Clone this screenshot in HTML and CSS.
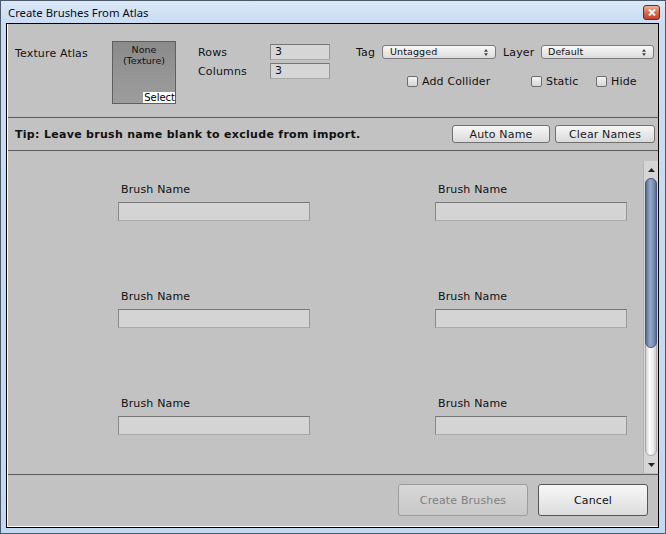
FILE: index.html
```html
<!DOCTYPE html>
<html>
<head>
<meta charset="utf-8">
<title>Create Brushes From Atlas</title>
<link rel="stylesheet" href="styles.css">
</head>
<body>
<div class="window">
  <div class="titlebar">
    <span class="title">Create Brushes From Atlas</span>
    <span class="close"><svg width="8" height="7" viewBox="0 0 8 7"><path d="M1 0.5 L7 6.5 M7 0.5 L1 6.5" stroke="#fff" stroke-width="2"/></svg></span>
  </div>
  <div class="client">
    <div class="top">
      <div class="atlas-label">Texture Atlas</div>
      <div class="texture">
        <div class="tex-text">None<br>(Texture)</div>
        <div class="tex-select">Select</div>
      </div>
      <div class="rc">
        <span class="lbl">Rows</span><span class="num">3</span>
        <span class="lbl">Columns</span><span class="num">3</span>
      </div>
      <div class="props">
        <div class="prop-row">
          <span class="tag-lbl">Tag</span>
          <span class="popup tag-pop">Untagged<svg width="4" height="7" viewBox="0 0 4 7"><path d="M0 2.8 L2 0 L4 2.8Z M0 4.2 L2 7 L4 4.2Z" fill="#444"/></svg></span>
          <span class="layer-lbl">Layer</span>
          <span class="popup layer-pop">Default<svg width="4" height="7" viewBox="0 0 4 7"><path d="M0 2.8 L2 0 L4 2.8Z M0 4.2 L2 7 L4 4.2Z" fill="#444"/></svg></span>
        </div>
        <div class="check-row">
          <span class="check w1"><span class="box"></span>Add Collider</span>
          <span class="check w2"><span class="box"></span>Static</span>
          <span class="check"><span class="box"></span>Hide</span>
        </div>
      </div>
    </div>
    <div class="tip">
      <span class="tip-text">Tip: Leave brush name blank to exclude from import.</span>
      <span class="btn auto">Auto Name</span>
      <span class="btn clear">Clear Names</span>
    </div>
    <div class="scroll">
      <div class="fields">
        <div class="field"><span class="field-lbl">Brush Name</span><span class="field-input"></span></div>
        <div class="field"><span class="field-lbl">Brush Name</span><span class="field-input"></span></div>
        <div class="field"><span class="field-lbl">Brush Name</span><span class="field-input"></span></div>
        <div class="field"><span class="field-lbl">Brush Name</span><span class="field-input"></span></div>
        <div class="field"><span class="field-lbl">Brush Name</span><span class="field-input"></span></div>
        <div class="field"><span class="field-lbl">Brush Name</span><span class="field-input"></span></div>
      </div>
      <div class="scrollbar">
        <span class="arrow"><svg width="7" height="4" viewBox="0 0 7 4"><path d="M0 4 L3.5 0 L7 4Z" fill="#222"/></svg></span>
        <span class="groove"><span class="thumb"></span></span>
        <span class="arrow"><svg width="7" height="4" viewBox="0 0 7 4"><path d="M0 0 L3.5 4 L7 0Z" fill="#222"/></svg></span>
      </div>
    </div>
    <div class="footer">
      <span class="big disabled">Create Brushes</span>
      <span class="big cancel">Cancel</span>
    </div>
  </div>
</div>
</body>
</html>
```
FILE: styles.css
```css
* { box-sizing: border-box; }
html, body { margin: 0; padding: 0; }
body {
  width: 666px; height: 534px; overflow: hidden;
  font-family: "DejaVu Sans", sans-serif; font-size: 11px; color: #111;
  letter-spacing: 0.15px;
  background: #c5daf2;
}
.window {
  width: 666px; height: 534px;
  border: 1px solid #4b5a6b;
  background: linear-gradient(#dbe8f7, #c9dcf3 22px, #c3d9f1);
  padding: 0 6px 5px 5px;
  display: flex; flex-direction: column;
}
.titlebar {
  height: 22px; flex: none;
  display: flex; align-items: center; justify-content: space-between;
  padding-left: 2px;
}
.title { font-family: "Noto Sans", sans-serif; font-size: 11.3px; letter-spacing: 0; color: #0a0a18; }
.close {
  width: 17px; height: 15px; margin-top: 1px; margin-right: -1px;
  border: 1px solid #6b2b1e; border-radius: 3px;
  background: linear-gradient(#efb3a0, #da6c50 50%, #c5402a);
  display: flex; align-items: center; justify-content: center;
}
.client {
  flex: 1;
  border: 1px solid #000;
  background: #c2c2c2;
  box-shadow: inset 1px -1px 0 #fff;
  padding: 0 0 1px 1px;
  display: flex; flex-direction: column;
}
.top {
  height: 94px; border-bottom: 1px solid #5d5d5d;
  display: flex; align-items: flex-start;
  padding: 17px 0 0 7px;
}
.atlas-label { width: 97px; padding-top: 6px; line-height: 13px; }
.texture {
  width: 64px; height: 63px; margin-right: 22px;
  border: 1px solid #5f5f5f;
  background: linear-gradient(#8a8a8a, #9d9d9d);
  display: flex; flex-direction: column;
}
.tex-text { font-size: 9.5px; letter-spacing: 0; line-height: 11px; text-align: center; padding-top: 2px; color: #111; }
.tex-select {
  margin-top: auto; align-self: flex-end;
  width: 32px; height: 11px; background: #fff;
  font-size: 10px; letter-spacing: 0; line-height: 11px; text-align: right; color: #000;
  white-space: nowrap;
}
.rc {
  display: grid; grid-template-columns: 72px 60px; row-gap: 3px;
  align-items: center; margin-top: 3px;
}
.lbl { line-height: 13px; }
.num {
  height: 16px; line-height: 14px; padding-left: 4px;
  border: 1px solid; border-color: #777 #999 #a8a8a8 #8a8a8a;
  background: #d6d6d6;
}
.props { margin-left: 26px; margin-top: 4px; }
.prop-row { display: flex; align-items: center; height: 14px; }
.tag-lbl { width: 26px; line-height: 13px; }
.layer-lbl { width: 38px; line-height: 13px; }
.popup {
  height: 14px;
  border: 1px solid #7a7a7a; border-radius: 3px;
  background: linear-gradient(#f8f8f8, #dcdcdc);
  font-size: 9.5px; letter-spacing: 0.1px; line-height: 12px;
  padding: 0 7px 0 7px;
  display: flex; align-items: center; justify-content: space-between;
}
.tag-pop { width: 114px; margin-right: 7px; }
.layer-pop { width: 113px; padding-left: 6px; }
.check-row { display: flex; align-items: center; height: 13px; margin-top: 16px; padding-left: 51px; }
.check { display: flex; align-items: center; line-height: 13px; }
.w1 { width: 124px; }
.w2 { width: 65px; }
.box {
  width: 11px; height: 11px; margin-right: 4px;
  border: 1px solid #6d6d6d; border-radius: 2px;
  background: linear-gradient(#f4f4f4, #d6d6d6);
}
.tip {
  height: 33px; border-bottom: 1px solid #5d5d5d;
  display: flex; align-items: center;
  padding: 0 3px 0 7px;
}
.tip-text { font-weight: bold; letter-spacing: 0.3px; flex: 1; line-height: 13px; }
.btn {
  height: 18px; line-height: 13px;
  border: 1px solid #6f6f6f; border-radius: 3px;
  background: linear-gradient(#f7f7f7, #dadada);
  display: flex; align-items: center; justify-content: center;
  color: #1a1a1a;
}
.auto { width: 98px; margin-right: 5px; }
.clear { width: 100px; }
.scroll { height: 324px; border-bottom: 1px solid #5d5d5d; display: flex; }
.fields {
  flex: 1;
  display: grid; grid-template-columns: 192px 192px;
  column-gap: 125px; row-gap: 69px; align-content: start;
  padding: 32px 0 0 110px;
}
.field { display: flex; flex-direction: column; }
.field-lbl { line-height: 13px; padding-left: 3px; margin-bottom: 6px; }
.field-input {
  height: 19px;
  border: 1px solid; border-color: #777 #999 #ababab #888;
  background: #d4d4d4;
}
.scrollbar {
  width: 15px; margin: 10px 0 1px 0;
  background: #d5d5d5; border-left: 1px solid #b3b3b3;
  display: flex; flex-direction: column; align-items: center;
}
.arrow { height: 17px; display: flex; align-items: center; justify-content: center; }
.groove {
  height: 278px; width: 12px;
  border: 1px solid #a9a9a9; border-radius: 6px;
  background: linear-gradient(to right, #d3d3d3, #fbfbfb 35%, #eeeeee 70%, #cdcdcd);
  display: flex; flex-direction: column;
}
.thumb {
  height: 170px; margin: -1px;
  border: 1px solid #475c80; border-radius: 6px;
  background: linear-gradient(to right, #566d95, #94a8c8 40%, #7f95ba 70%, #566d95);
}
.footer {
  flex: 1;
  display: flex; justify-content: flex-end; align-items: flex-start;
  padding: 9px 10px 0 0;
}
.big {
  height: 32px; border-radius: 3px;
  display: flex; align-items: center; justify-content: center;
  line-height: 13px;
}
.disabled {
  width: 130px; margin-right: 10px;
  border: 1px solid #9c9c9c;
  background: linear-gradient(#d8d8d8, #c8c8c8);
  color: #808080;
}
.cancel {
  width: 110px;
  border: 1px solid #555;
  background: linear-gradient(#f8f8f8, #dcdcdc);
  color: #111;
}
```
